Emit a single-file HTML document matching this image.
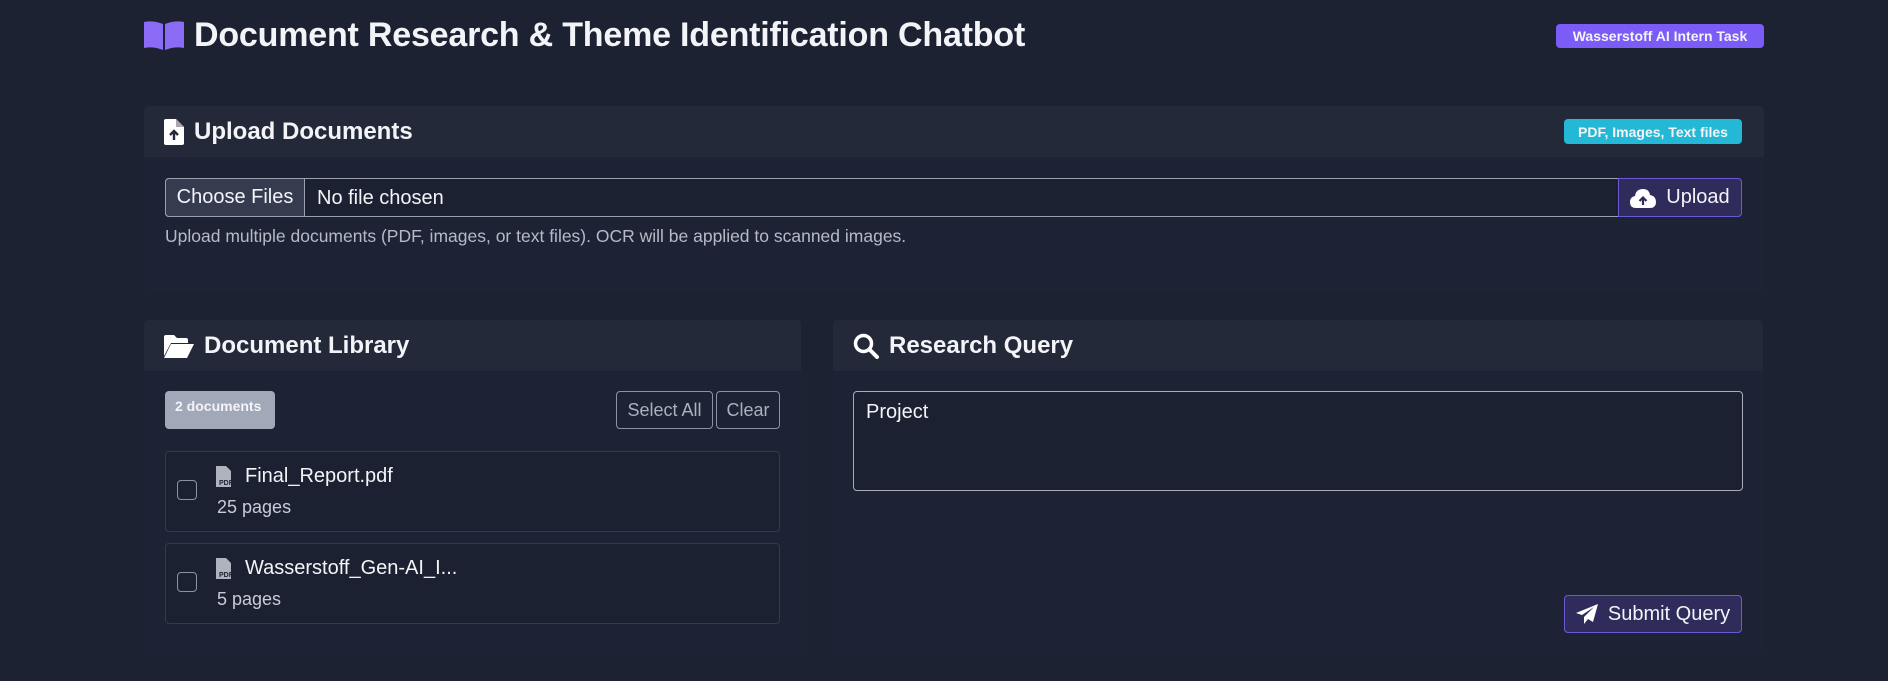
<!DOCTYPE html>
<html><head><meta charset="utf-8"><style>
*{box-sizing:border-box;margin:0;padding:0}
body{width:1888px;height:681px;background:#1c2232;font-family:"Liberation Sans",sans-serif;color:#f3f4f8;position:relative;overflow:hidden}
.a{position:absolute}
.card{position:absolute;background:#1d2334;border-radius:4px;overflow:hidden}
.hd{position:absolute;left:0;right:0;top:0;background:#232939;display:flex;align-items:center;padding-left:20px;font-size:24px;font-weight:bold}
.hd svg{margin-right:10px}
.btn{position:absolute;border:1px solid #8b92a4;border-radius:4px;color:#aab0be;font-size:18px;display:flex;align-items:center;justify-content:center}
.item{position:absolute;left:21px;width:615px;border:1px solid #323a4b;border-radius:4px;background:#1c2131}
.cb{position:absolute;left:11px;width:20px;height:20px;border:1px solid #8d93a3;border-radius:4px}
.nm{position:absolute;left:50px;font-size:20px;display:flex;align-items:center}
.pg{position:absolute;left:51px;font-size:18px;color:#c8ccd6}
</style></head><body>
<svg class="a" style="left:144px;top:20px" width="40" height="30" viewBox="0 0 40 30"><path d="M0 2Q9 0 19 4V30Q9 26 0 28Z" fill="#8b6cf6"/><path d="M21 4Q31 0 40 2V28Q31 26 21 30Z" fill="#8b6cf6"/></svg>
<div class="a" style="left:194px;top:16px;font-size:34px;font-weight:bold;letter-spacing:-0.2px">Document Research &amp; Theme Identification Chatbot</div>
<div class="a" style="left:1556px;top:24px;width:208px;height:24px;background:#7c5cf7;border-radius:4px;font-size:14px;font-weight:bold;display:flex;align-items:center;justify-content:center">Wasserstoff AI Intern Task</div>

<div class="card" style="left:144px;top:106px;width:1620px;height:185px">
<div class="hd" style="height:51px"><svg width="20" height="26" viewBox="0 0 20 26"><path d="M0 2Q0 0 2 0H12L20 8V24Q20 26 18 26H2Q0 26 0 24Z" fill="#fff"/><path d="M12 0V8H20" fill="#aaa"/><path d="M10 21V13M6 16L10 12L14 16" stroke="#232939" stroke-width="2.4" fill="none"/></svg>Upload Documents</div>
<div class="a" style="left:1420px;top:13px;width:178px;height:25px;background:#22b8d6;border-radius:4px;font-size:14px;font-weight:bold;display:flex;align-items:center;justify-content:center">PDF, Images, Text files</div>
<div class="a" style="left:21px;top:72px;width:1457px;height:39px;border:1px solid #9aa0ad;border-radius:4px 0 0 4px;background:#1c2131"></div>
<div class="a" style="left:21px;top:72px;width:140px;height:39px;border:1px solid #9aa0ad;border-radius:4px 0 0 4px;background:#363c50;font-size:20px;display:flex;align-items:center;justify-content:center">Choose Files</div>
<div class="a" style="left:173px;top:81px;font-size:20px">No file chosen</div>
<div class="a" style="left:1474px;top:72px;width:124px;height:39px;border:1px solid #6b5ad6;border-radius:0 4px 4px 0;background:#2f2c5c;font-size:20px;display:flex;align-items:center;justify-content:center"><svg width="26" height="20" viewBox="0 0 26 20" style="margin-right:10px"><path d="M6 20Q0 20 0 14Q0 9 5 8Q6 1 13 1Q19 1 20 7Q26 8 26 14Q26 20 20 20Z" fill="#fff"/><path d="M13 17V10M9.5 13L13 9.5L16.5 13" stroke="#2f2c5c" stroke-width="2.2" fill="none"/></svg>Upload</div>
<div class="a" style="left:21px;top:120px;font-size:17.5px;color:#b5bac6">Upload multiple documents (PDF, images, or text files). OCR will be applied to scanned images.</div>
</div>

<div class="card" style="left:144px;top:320px;width:657px;height:336px">
<div class="hd" style="height:51px"><svg width="30" height="24" viewBox="0 0 30 24"><path d="M0 3Q0 1 2 1H10L13 4H22Q24 4 24 6V9H7L0 22Z" fill="#fff"/><path d="M7 10H30L23 24H0Z" fill="#fff"/></svg>Document Library</div>
<div class="a" style="left:21px;top:71px;width:110px;height:38px;background:#a1a8b8;border-radius:4px;font-size:14px;font-weight:bold;padding:7px 0 0 10px">2 documents</div>
<div class="btn" style="left:472px;top:71px;width:97px;height:38px">Select All</div>
<div class="btn" style="left:572px;top:71px;width:64px;height:38px">Clear</div>
<div class="item" style="top:131px;height:81px"><div class="cb" style="top:28px"></div><div class="nm" style="top:13px"><svg width="17" height="21" viewBox="0 0 17 21" style="margin-right:12px"><path d="M0 0H10L15 5V21H0Z" fill="#aeb3bf"/><text x="3" y="19" font-size="7" font-weight="bold" fill="#1c2131" font-family="Liberation Sans">PDF</text></svg>Final_Report.pdf</div><div class="pg" style="top:45px">25 pages</div></div>
<div class="item" style="top:223px;height:81px"><div class="cb" style="top:28px"></div><div class="nm" style="top:13px"><svg width="17" height="21" viewBox="0 0 17 21" style="margin-right:12px"><path d="M0 0H10L15 5V21H0Z" fill="#aeb3bf"/><text x="3" y="19" font-size="7" font-weight="bold" fill="#1c2131" font-family="Liberation Sans">PDF</text></svg>Wasserstoff_Gen-AI_I...</div><div class="pg" style="top:45px">5 pages</div></div>
</div>

<div class="card" style="left:833px;top:320px;width:930px;height:336px">
<div class="hd" style="height:51px"><svg width="26" height="26" viewBox="0 0 26 26"><circle cx="10.5" cy="10.5" r="8" stroke="#fff" stroke-width="3.5" fill="none"/><path d="M16.5 16.5L24 24" stroke="#fff" stroke-width="4" stroke-linecap="round"/></svg>Research Query</div>
<div class="a" style="left:20px;top:71px;width:890px;height:100px;border:1px solid #a8adb9;border-radius:4px;background:#1c2131;font-size:20px;padding:9px 12px">Project</div>
<div class="a" style="left:731px;top:275px;width:178px;height:38px;border:1px solid #6b5ad6;border-radius:4px;background:#2f2c5c;font-size:20px;display:flex;align-items:center;justify-content:center"><svg width="22" height="20" viewBox="0 0 22 20" style="margin-right:10px"><path d="M22 0L0 9L6 11L18 3L8 13V20L12 15L17 18Z" fill="#fff"/></svg>Submit Query</div>
</div>
</body></html>
